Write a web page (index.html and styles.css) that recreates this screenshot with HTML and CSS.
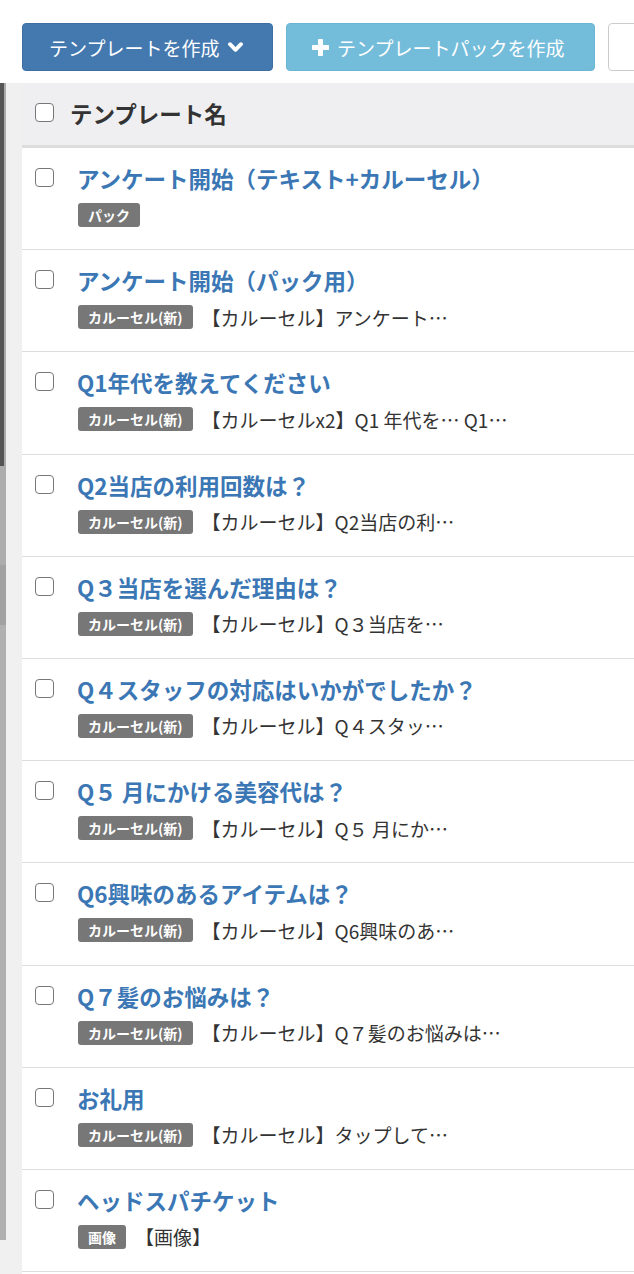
FILE: index.html
```html
<!DOCTYPE html>
<html lang="ja">
<head>
<meta charset="utf-8">
<title>テンプレート</title>
<link rel="stylesheet" href="styles.css">
</head>
<body>
<div class="toolbar">
  <button class="btn btn-primary">テンプレートを作成<svg class="chev" viewBox="0 0 15 11" width="15" height="11"><path d="M2 2.2 L7.5 7.8 L13 2.2" fill="none" stroke="#fff" stroke-width="3.8" stroke-linecap="round" stroke-linejoin="round"/></svg></button>
  <button class="btn btn-info"><svg class="plus" viewBox="0 0 17 17" width="17" height="17"><path d="M8.5 1.5 V15.5 M1.5 8.5 H15.5" stroke="#fff" stroke-width="5" stroke-linecap="round"/></svg>テンプレートパックを作成</button>
  <button class="btn btn-default"></button>
</div>
<div class="main">
  <div class="sidebar">
    <div class="track">
      <div class="seg seg1"><div class="thumb"></div></div>
      <div class="seg seg2"></div>
      <div class="seg seg3"></div>
      <div class="seg seg4"></div>
    </div>
  </div>
  <div class="table">
    <div class="thead">
      <span class="cb"></span>
      <span class="th">テンプレート名</span>
    </div>
    <div class="row">
      <span class="cb"></span>
      <div class="cell">
        <div class="title">アンケート開始（テキスト+カルーセル）</div>
        <div class="meta"><span class="badge">パック</span></div>
      </div>
    </div>
    <div class="row">
      <span class="cb"></span>
      <div class="cell">
        <div class="title">アンケート開始（パック用）</div>
        <div class="meta"><span class="badge">カルーセル(新)</span><span class="desc">【カルーセル】アンケート…</span></div>
      </div>
    </div>
    <div class="row">
      <span class="cb"></span>
      <div class="cell">
        <div class="title">Q1年代を教えてください</div>
        <div class="meta"><span class="badge">カルーセル(新)</span><span class="desc">【カルーセルx2】Q1 年代を… Q1…</span></div>
      </div>
    </div>
    <div class="row">
      <span class="cb"></span>
      <div class="cell">
        <div class="title">Q2当店の利用回数は？</div>
        <div class="meta"><span class="badge">カルーセル(新)</span><span class="desc">【カルーセル】Q2当店の利…</span></div>
      </div>
    </div>
    <div class="row">
      <span class="cb"></span>
      <div class="cell">
        <div class="title">Q３当店を選んだ理由は？</div>
        <div class="meta"><span class="badge">カルーセル(新)</span><span class="desc">【カルーセル】Q３当店を…</span></div>
      </div>
    </div>
    <div class="row">
      <span class="cb"></span>
      <div class="cell">
        <div class="title">Q４スタッフの対応はいかがでしたか？</div>
        <div class="meta"><span class="badge">カルーセル(新)</span><span class="desc">【カルーセル】Q４スタッ…</span></div>
      </div>
    </div>
    <div class="row">
      <span class="cb"></span>
      <div class="cell">
        <div class="title">Q５ 月にかける美容代は？</div>
        <div class="meta"><span class="badge">カルーセル(新)</span><span class="desc">【カルーセル】Q５ 月にか…</span></div>
      </div>
    </div>
    <div class="row">
      <span class="cb"></span>
      <div class="cell">
        <div class="title">Q6興味のあるアイテムは？</div>
        <div class="meta"><span class="badge">カルーセル(新)</span><span class="desc">【カルーセル】Q6興味のあ…</span></div>
      </div>
    </div>
    <div class="row">
      <span class="cb"></span>
      <div class="cell">
        <div class="title">Q７髪のお悩みは？</div>
        <div class="meta"><span class="badge">カルーセル(新)</span><span class="desc">【カルーセル】Q７髪のお悩みは…</span></div>
      </div>
    </div>
    <div class="row">
      <span class="cb"></span>
      <div class="cell">
        <div class="title">お礼用</div>
        <div class="meta"><span class="badge">カルーセル(新)</span><span class="desc">【カルーセル】タップして…</span></div>
      </div>
    </div>
    <div class="row">
      <span class="cb"></span>
      <div class="cell">
        <div class="title">ヘッドスパチケット</div>
        <div class="meta"><span class="badge">画像</span><span class="desc">【画像】</span></div>
      </div>
    </div>
  </div>
</div>
</body>
</html>
```
FILE: styles.css
```css
* { box-sizing: border-box; }
html, body {
  margin: 0;
  padding: 0;
  background: #fff;
  overflow: hidden;
}
body {
  font-family: "Noto Sans CJK JP", "Noto Sans", sans-serif;
  color: #333;
  width: 634px;
  height: 1274px;
}
.toolbar {
  display: flex;
  gap: 13px;
  padding: 23px 0 12px 22px;
  white-space: nowrap;
  overflow: hidden;
}
.btn {
  flex: none;
  height: 48px;
  border-radius: 4px;
  font-family: inherit;
  font-size: 19px;
  color: #fff;
  display: flex;
  align-items: center;
  padding: 0 27px;
  border: 1px solid transparent;
  line-height: 1;
}
.btn-primary {
  background: #4479b0;
  border-color: #3e6fa3;
  width: 251px;
  padding-left: 26px;
}
.btn-info {
  background: #73bcda;
  border-color: #6bb5d3;
  width: 309px;
  padding-left: 25px;
}
.btn-default {
  background: #fff;
  border-color: #ccc;
  width: 60px;
}
.chev { margin-left: 9px; margin-top: 1px; }
.plus { margin-right: 8px; }
.main {
  display: flex;
  align-items: stretch;
  min-height: 1191px;
}
.sidebar {
  width: 22px;
  flex: none;
  background: #f0f0f0;
}
.track {
  width: 6px;
  display: flex;
  flex-direction: column;
}
.seg1 {
  height: 383px;
  background: #aaaaaa;
}
.thumb {
  width: 4px;
  height: 100%;
  background: #555;
}
.seg2 { height: 99px; background: #adadad; }
.seg3 { height: 60px; background: #a2a2a2; }
.seg4 { height: 615px; background: #b0b0b0; }
.table {
  flex: 1;
  min-width: 0;
}
.thead {
  height: 65px;
  background: #efeff1;
  border-bottom: 3px solid #ddd;
  display: flex;
  align-items: center;
  padding-left: 13px;
  padding-bottom: 3px;
}
.th {
  font-weight: bold;
  font-size: 22.5px;
  margin-left: 16px;
  color: #333;
}
.cb {
  flex: none;
  width: 19px;
  height: 19px;
  border: 1.5px solid #777;
  border-radius: 4px;
  background: #fff;
}
.row {
  display: flex;
  align-items: flex-start;
  height: 102.2px;
  border-bottom: 1px solid #ddd;
  padding: 15px 0 0 13px;
  white-space: nowrap;
  overflow: hidden;
}
.row .cb { margin-top: 5px; margin-right: 23px; }
.cell { min-width: 0; }
.title {
  font-size: 22.5px;
  font-weight: bold;
  color: #3b77b4;
  line-height: 30px;
}
.meta {
  display: flex;
  align-items: center;
  margin-top: 10px;
  height: 24px;
}
.badge {
  background: #777;
  color: #fff;
  font-weight: bold;
  font-size: 14px;
  height: 24px;
  line-height: 24px;
  padding: 0 10px;
  border-radius: 3px;
  margin-left: 1px;
}
.desc {
  font-size: 19px;
  margin-left: 9px;
  color: #333;
}
```
